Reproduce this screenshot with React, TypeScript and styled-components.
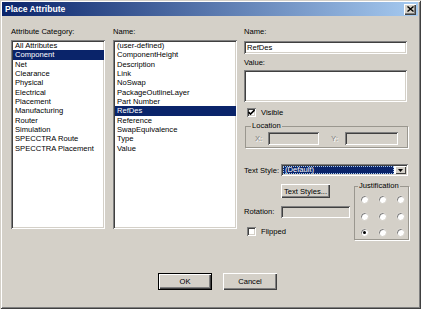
import React from 'react';
import styled, { createGlobalStyle } from 'styled-components';

const Global = createGlobalStyle`
  html, body { margin: 0; padding: 0; background: #d4d0c8; }
  body { font-family: "Liberation Sans", Arial, sans-serif; font-size: 7.6px; color: #000; }
  * { box-sizing: border-box; }
`;

const Window = styled.div`
  width: 421px;
  height: 309px;
  background: #d4d0c8;
  box-shadow: inset 1px 1px #d4d0c8, inset -1px -1px #404040, inset 2px 2px #ffffff, inset -2px -2px #808080;
  padding: 2px 3px 3px 2px;
  display: flex;
  flex-direction: column;
`;

const TitleBar = styled.div`
  height: 14px;
  background: linear-gradient(to right, #0a246a, #a6caf0);
  display: flex;
  align-items: center;
  justify-content: space-between;
  padding: 0 2px 0 3px;
`;

const TitleText = styled.span`
  color: #fff;
  font-weight: bold;
  font-size: 8.6px;
`;

const CloseButton = styled.div`
  width: 12px;
  height: 11px;
  background: #d4d0c8;
  box-shadow: inset 1px 1px #fff, inset -1px -1px #404040, inset -2px -2px #808080;
  display: flex;
  align-items: center;
  justify-content: center;
`;

const Body = styled.div`
  flex: 1;
  display: flex;
  flex-direction: column;
  padding: 11px 0 0 9px;
`;

const MainRow = styled.div`
  display: flex;
  align-items: flex-start;
`;

const Column = styled.div<{ $w: number; $mr?: number }>`
  width: ${(p) => p.$w}px;
  margin-right: ${(p) => p.$mr ?? 0}px;
  display: flex;
  flex-direction: column;
`;

const Label = styled.div<{ $mt?: number; $mb?: number }>`
  height: 10px;
  line-height: 10px;
  margin-top: ${(p) => p.$mt ?? 0}px;
  margin-bottom: ${(p) => p.$mb ?? 3}px;
  white-space: nowrap;
`;

const ListBox = styled.div`
  height: 189px;
  background: #fff;
  box-shadow: inset 1px 1px #808080, inset -1px -1px #ffffff, inset 2px 2px #404040, inset -2px -2px #d4d0c8;
  padding: 1px 1px 2px 2px;
`;

const ListItem = styled.div<{ $sel?: boolean }>`
  height: 9.33px;
  line-height: 9.33px;
  padding-left: 2px;
  white-space: nowrap;
  background: ${(p) => (p.$sel ? '#0a246a' : 'transparent')};
  color: ${(p) => (p.$sel ? '#fff' : '#000')};
`;

const TextField = styled.div<{ $h: number; $disabled?: boolean; $w?: number }>`
  height: ${(p) => p.$h}px;
  width: ${(p) => (p.$w ? `${p.$w}px` : '163px')};
  background: ${(p) => (p.$disabled ? '#d4d0c8' : '#fff')};
  box-shadow: inset 1px 1px #808080, inset -1px -1px #ffffff, inset 2px 2px #404040, inset -2px -2px #d4d0c8;
  padding: 2px 3px;
  line-height: ${(p) => p.$h - 4}px;
  white-space: nowrap;
`;

const CheckRow = styled.div<{ $mt: number }>`
  display: flex;
  align-items: center;
  height: 10px;
  margin-top: ${(p) => p.$mt}px;
  padding-left: 3px;
`;

const CheckBox = styled.div`
  width: 9px;
  height: 9px;
  background: #fff;
  box-shadow: inset 1px 1px #808080, inset -1px -1px #ffffff, inset 2px 2px #404040, inset -2px -2px #d4d0c8;
  margin-right: 5px;
  display: flex;
  align-items: center;
  justify-content: center;
`;

const Group = styled.fieldset<{ $w: number; $h: number; $mt: number; $ml?: number }>`
  width: ${(p) => p.$w}px;
  height: ${(p) => p.$h}px;
  margin: ${(p) => p.$mt}px 0 0 ${(p) => p.$ml ?? 0}px;
  padding: 0;
  min-width: 0;
  border: 1px solid #9a978f;
  box-shadow: 1px 1px 0 #ffffff;
`;

const Legend = styled.legend<{ $ml: number }>`
  padding: 0 1px;
  margin-left: ${(p) => p.$ml}px;
  line-height: 10px;
  height: 10px;
`;

const LocationRow = styled.div`
  display: flex;
  align-items: center;
  padding: 1px 0 0 9px;
`;

const DisabledLabel = styled.span<{ $w: number }>`
  width: ${(p) => p.$w}px;
  color: #808080;
  text-shadow: 1px 1px 0 #fff;
`;

const StyleRow = styled.div`
  display: flex;
  align-items: center;
  margin-top: 16px;
  height: 12px;
`;

const SideLabel = styled.span`
  width: 37px;
  white-space: nowrap;
`;

const Combo = styled.div`
  width: 127px;
  height: 12px;
  background: #fff;
  box-shadow: inset 1px 1px #808080, inset -1px -1px #ffffff, inset 2px 2px #404040, inset -2px -2px #d4d0c8;
  padding: 2px;
  display: flex;
`;

const ComboValue = styled.div`
  flex: 1;
  background: #0a246a;
  color: #fff;
  line-height: 8px;
  padding-left: 2px;
  outline: 1px dotted #a6caf0;
  outline-offset: -1px;
  margin-right: 1px;
`;

const ComboButton = styled.div`
  width: 11px;
  height: 8px;
  background: #d4d0c8;
  box-shadow: inset 1px 1px #fff, inset -1px -1px #404040;
  display: flex;
  align-items: center;
  justify-content: center;
`;

const LowerRow = styled.div`
  display: flex;
  align-items: flex-start;
  margin-top: 7px;
`;

const LowerLeft = styled.div`
  width: 110px;
  display: flex;
  flex-direction: column;
`;

const PushButton = styled.div<{ $w: number; $h: number; $default?: boolean }>`
  width: ${(p) => p.$w}px;
  height: ${(p) => p.$h}px;
  background: #d4d0c8;
  box-shadow: ${(p) =>
    p.$default
      ? 'inset 1px 1px #000, inset -1px -1px #000, inset 2px 2px #fff, inset -2px -2px #404040, inset -3px -3px #808080'
      : 'inset 1px 1px #fff, inset -1px -1px #404040, inset -2px -2px #808080'};
  display: flex;
  align-items: center;
  justify-content: center;
  white-space: nowrap;
`;

const IndentedButton = styled(PushButton)`
  margin: 1px 0 0 37px;
`;

const RotationRow = styled.div`
  display: flex;
  align-items: center;
  margin-top: 8px;
  height: 11px;
`;

const RadioGrid = styled.div`
  display: grid;
  grid-template-columns: repeat(3, 9px);
  grid-auto-rows: 9px;
  column-gap: 9px;
  row-gap: 7.5px;
  padding: 4px 0 0 5px;
`;

const Radio = styled.div`
  width: 9px;
  height: 9px;
  border-radius: 50%;
  background: #fff;
  box-shadow: inset 1px 1px #808080, inset -1px -1px #ffffff;
  border: 0.5px solid #d4d0c8;
  display: flex;
  align-items: center;
  justify-content: center;
`;

const Dot = styled.div`
  width: 3px;
  height: 3px;
  border-radius: 50%;
  background: #000;
`;

const ButtonRow = styled.div`
  display: flex;
  gap: 11px;
  margin-top: 33px;
  padding-left: 147px;
`;

const categories = [
  'All Attributes',
  'Component',
  'Net',
  'Clearance',
  'Physical',
  'Electrical',
  'Placement',
  'Manufacturing',
  'Router',
  'Simulation',
  'SPECCTRA Route',
  'SPECCTRA Placement',
];

const names = [
  '(user-defined)',
  'ComponentHeight',
  'Description',
  'Link',
  'NoSwap',
  'PackageOutlineLayer',
  'Part Number',
  'RefDes',
  'Reference',
  'SwapEquivalence',
  'Type',
  'Value',
];

const CheckMark = () => (
  <svg width="7" height="7" viewBox="0 0 7 7">
    <path d="M0.5 3 L2.5 5 L6.5 1" stroke="#000" strokeWidth="1.6" fill="none" />
  </svg>
);

export default function App() {
  return (
    <>
      <Global />
      <Window>
        <TitleBar>
          <TitleText>Place Attribute</TitleText>
          <CloseButton>
            <svg width="7" height="6" viewBox="0 0 7 6">
              <path d="M0.5 0.5 L6.5 5.5 M6.5 0.5 L0.5 5.5" stroke="#000" strokeWidth="1.4" />
            </svg>
          </CloseButton>
        </TitleBar>
        <Body>
          <MainRow>
            <Column $w={94} $mr={8}>
              <Label>Attribute Category:</Label>
              <ListBox>
                {categories.map((c) => (
                  <ListItem key={c} $sel={c === 'Component'}>
                    {c}
                  </ListItem>
                ))}
              </ListBox>
            </Column>
            <Column $w={124} $mr={7}>
              <Label>Name:</Label>
              <ListBox>
                {names.map((n) => (
                  <ListItem key={n} $sel={n === 'RefDes'}>
                    {n}
                  </ListItem>
                ))}
              </ListBox>
            </Column>
            <Column $w={166}>
              <Label $mb={4}>Name:</Label>
              <TextField $h={13}>RefDes</TextField>
              <Label $mt={4} $mb={2}>Value:</Label>
              <TextField $h={32} />
              <CheckRow $mt={5}>
                <CheckBox>
                  <CheckMark />
                </CheckBox>
                Visible
              </CheckRow>
              <Group $w={163} $h={27} $mt={4} $ml={1}>
                <Legend $ml={5}>Location</Legend>
                <LocationRow>
                  <DisabledLabel $w={13}>X:</DisabledLabel>
                  <TextField $h={13} $w={51} $disabled />
                  <DisabledLabel $w={14} style={{ marginLeft: 12 }}>Y:</DisabledLabel>
                  <TextField $h={13} $w={53} $disabled />
                </LocationRow>
              </Group>
              <StyleRow>
                <SideLabel>Text Style:</SideLabel>
                <Combo>
                  <ComboValue>(Default)</ComboValue>
                  <ComboButton>
                    <svg width="5" height="3" viewBox="0 0 5 3">
                      <path d="M0 0 H5 L2.5 3 Z" fill="#000" />
                    </svg>
                  </ComboButton>
                </Combo>
              </StyleRow>
              <LowerRow>
                <LowerLeft>
                  <IndentedButton $w={49} $h={14}>Text Styles...</IndentedButton>
                  <RotationRow>
                    <SideLabel>Rotation:</SideLabel>
                    <TextField $h={12} $w={69} $disabled />
                  </RotationRow>
                  <CheckRow $mt={9}>
                    <CheckBox />
                    Flipped
                  </CheckRow>
                </LowerLeft>
                <Group $w={55} $h={59} $mt={-2}>
                  <Legend $ml={3}>Justification</Legend>
                  <RadioGrid>
                    {Array.from({ length: 9 }).map((_, i) => (
                      <Radio key={i}>{i === 6 && <Dot />}</Radio>
                    ))}
                  </RadioGrid>
                </Group>
              </LowerRow>
            </Column>
          </MainRow>
          <ButtonRow>
            <PushButton $w={54} $h={17} $default>
              OK
            </PushButton>
            <PushButton $w={54} $h={17}>
              Cancel
            </PushButton>
          </ButtonRow>
        </Body>
      </Window>
    </>
  );
}
